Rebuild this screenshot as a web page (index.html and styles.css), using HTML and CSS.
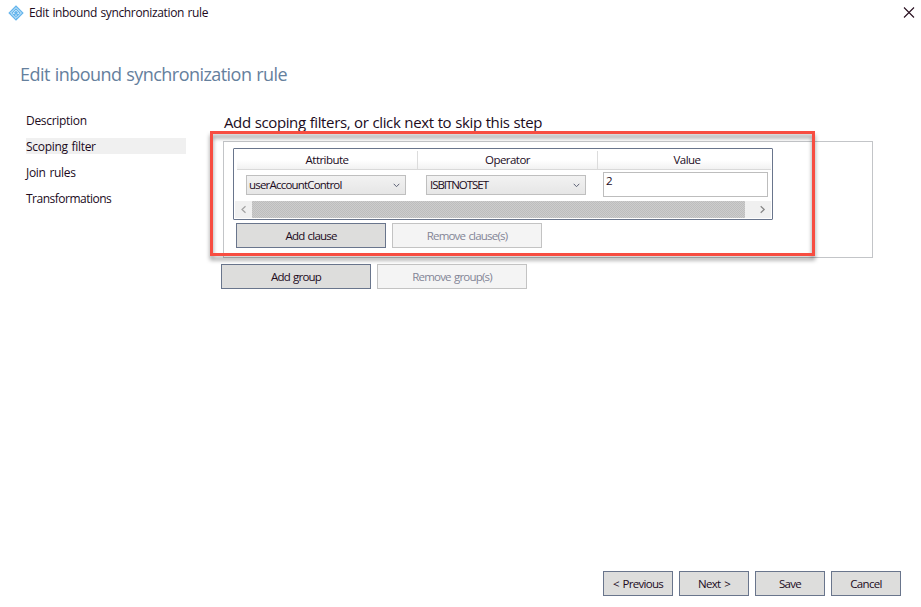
FILE: index.html
```html
<!DOCTYPE html>
<html lang="en">
<head>
<meta charset="utf-8">
<title>Edit inbound synchronization rule</title>
<link rel="stylesheet" href="styles.css">
</head>
<body>
<div class="window">
  <header class="titlebar">
    <svg class="app-icon" width="16" height="16" viewBox="0 0 16 16">
      <path d="M8 .3 15.7 8 8 15.7.3 8Z" fill="#63b4ec"/>
      <path d="M8 2.6 13.4 8 8 13.4 2.6 8Z" fill="none" stroke="#d9effc" stroke-width="1"/>
      <path d="M8 5.2 5 8.4h6ZM8 8.4v3" fill="none" stroke="#e6f5fe" stroke-width=".9"/>
      <circle cx="8" cy="8" r="1.5" fill="#63b4ec"/>
    </svg>
    <span class="caption">Edit inbound synchronization rule</span>
    <svg class="close" width="12" height="12" viewBox="0 0 12 12"><path d="M1 .5 11 10.500M11 .5 1 10.500" stroke="#2a1020" stroke-width="1.1"/></svg>
  </header>
  <h1>Edit inbound synchronization rule</h1>
  <div class="body">
    <nav>
      <a>Description</a>
      <a class="current">Scoping filter</a>
      <a>Join rules</a>
      <a class="tight">Transformations</a>
    </nav>
    <main>
      <h2>Add scoping filters, or click next to skip this step</h2>
      <section class="group">
        <div class="grid">
          <div class="head"><span>Attribute</span><span>Operator</span><span>Value</span></div>
          <div class="row">
            <div class="combo"><span class="attr">userAccountControl</span><svg width="7" height="5" viewBox="0 0 7 5"><path d="M.7.8 3.5 3.7 6.3.8" fill="none" stroke="#5c6075"/></svg></div>
            <div class="combo"><span class="oper">ISBITNOTSET</span><svg width="7" height="5" viewBox="0 0 7 5"><path d="M.7.8 3.5 3.7 6.3.8" fill="none" stroke="#5c6075"/></svg></div>
            <div class="textbox">2</div>
          </div>
          <div class="scrollbar">
            <svg width="17" height="17" viewBox="0 0 17 17"><path d="M10.500 5.2 7 8.5l3.5 3.3" fill="none" stroke="#a2a2a2" stroke-width="1.2"/></svg>
            <div class="thumb"></div>
            <svg width="26" height="17" viewBox="0 0 26 17"><path d="M15.7 5.2 19.2 8.5l-3.5 3.3" fill="none" stroke="#858585" stroke-width="1.2"/></svg>
          </div>
        </div>
        <div class="actions">
          <div class="btn">Add clause</div>
          <div class="btn disabled">Remove clause(s)</div>
        </div>
        <div class="highlight"></div>
      </section>
      <div class="actions outer">
        <div class="btn">Add group</div>
        <div class="btn disabled">Remove group(s)</div>
      </div>
    </main>
  </div>
  <footer>
    <div class="btn">&lt; Previous</div>
    <div class="btn">Next &gt;</div>
    <div class="btn">Save</div>
    <div class="btn">Cancel</div>
  </footer>
</div>
</body>
</html>
```
FILE: styles.css
```css
* { box-sizing: border-box; }
body {
  margin: 0;
  background: #fff;
  color: #210b1c;
  font: 11.5px/16px "Open Sans", "Noto Sans", sans-serif;
  letter-spacing: -0.55px;
  word-spacing: 0.5px;
  white-space: nowrap;
}
.window { width: 921px; height: 607px; display: flex; flex-direction: column; overflow: hidden; }
.titlebar { height: 26px; display: flex; align-items: center; padding: 0 6px 0 8px; }
.caption { margin-left: 5px; flex: 1; font-size: 12px; letter-spacing: -0.35px; word-spacing: 0.7px; }
h1 {
  margin: 35px 0 0 20px;
  font-size: 18px;
  line-height: 26px;
  font-weight: 400;
  letter-spacing: -0.55px;
  word-spacing: 0.8px;
  color: #65809d;
}
.body { display: flex; margin-top: 25px; flex: 1; }
nav {
  width: 160px;
  margin-left: 26px;
  display: flex;
  flex-direction: column;
  gap: 10px;
  font-size: 12px;
  letter-spacing: -0.3px;
  word-spacing: 1px;
}
nav a { height: 16px; line-height: 17px; }
nav .tight { letter-spacing: -0.5px; }
.current { background: #f0f0f0; }
main { margin-left: 35px; }
h2 {
  margin: 0 0 0 3px;
  height: 29px;
  line-height: 20px;
  font-size: 15px;
  font-weight: 400;
  letter-spacing: -0.38px;
  word-spacing: 0.45px;
}
.group {
  position: relative;
  width: 650px;
  height: 117px;
  margin-left: 2px;
  padding: 6px 9px;
  border: 1px solid #c3c5c8;
}
.grid {
  width: 540px;
  height: 72px;
  border: 1px solid #69758c;
  border-radius: 1px;
  padding: 2px 1px 1px;
  display: flex;
  flex-direction: column;
}
.head {
  height: 19px;
  margin-left: 2px;
  display: grid;
  grid-template-columns: 180px 180px 1fr;
  text-align: center;
  line-height: 18px;
  border-bottom: 1px solid #d9d9d9;
  background: linear-gradient(#fff 50%, #f2f2f2);
}
.head span + span { border-left: 1px solid #dcdcdc; }
.head span:last-child { padding-left: 5px; }
.row { display: flex; margin-left: 11px; height: 31px; padding-top: 2px; }
.combo {
  width: 160px;
  height: 20px;
  margin: 3px 20px 0 0;
  padding: 0 5px 0 2px;
  display: flex;
  align-items: center;
  justify-content: space-between;
  border: 1px solid #bfbfbf;
  background: linear-gradient(#f2f2f2, #e6e6e6);
}
.attr { letter-spacing: -0.8px; }
.oper { letter-spacing: -1.05px; margin-left: 1px; }
.textbox { width: 165px; height: 25px; margin-left: -3px; padding-left: 2px; border: 1px solid #bdbdbd; }
.scrollbar { display: flex; height: 17px; background: #f0f0f0; }
.thumb { flex: 1; background: repeating-conic-gradient(#bdbdbd 0 25%, #cdcdcd 0 50%) 0 0 / 2px 2px; }
.actions { display: flex; gap: 6px; margin: 3px 0 0 3px; letter-spacing: -0.8px; word-spacing: 1px; }
.outer { margin: 6px 0 0; }
.btn {
  width: 150px;
  height: 25px;
  border: 1px solid #69758c;
  background: #dddddc;
  text-align: center;
  line-height: 24px;
}
.disabled { border-color: #c3c3c3; background: #f4f4f4; color: #838596; }
.highlight {
  position: absolute;
  left: -14px;
  top: -11px;
  width: 605px;
  height: 125px;
  border: 3px solid #f74d41;
  filter: drop-shadow(0 4px 2px rgba(0, 0, 0, .42));
}
footer { display: flex; gap: 6px; margin: 0 20px 11px auto; letter-spacing: -0.7px; word-spacing: 1.5px; }
footer .btn { width: 70px; }
```
